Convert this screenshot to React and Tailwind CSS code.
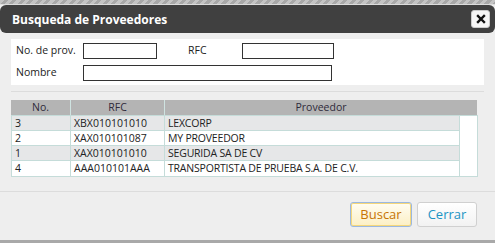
import React from "react"

const ROWS = [
  { no: "3", rfc: "XBX010101010", name: "LEXCORP" },
  { no: "2", rfc: "XAX010101087", name: "MY PROVEEDOR" },
  { no: "1", rfc: "XAX010101010", name: "SEGURIDA SA DE CV" },
  { no: "4", rfc: "AAA010101AAA", name: "TRANSPORTISTA DE PRUEBA S.A. DE C.V." },
]

function App() {
  return (
    <div
      className="flex h-[243px] w-[495px] flex-col overflow-hidden bg-[#eeeeee] text-[10.5px] text-[#222]"
      style={{ fontFamily: '"Open Sans", "DejaVu Sans", sans-serif' }}
    >
      <div className="h-[4px] shrink-0 bg-[repeating-linear-gradient(135deg,#c4c4c4_0,#c4c4c4_3px,#a8a8a8_3px,#a8a8a8_6px)]" />

      <div className="flex flex-1 flex-col border-t border-[#dddddd]">
        {/* title bar */}
        <div className="flex h-[28px] items-center justify-between rounded-[6px] bg-[#404040] pl-[12px] pr-[5px]">
          <span className="pt-[1px] text-[12px] font-bold text-white">Busqueda de Proveedores</span>
          <button className="flex h-[18px] w-[19px] items-center justify-center rounded-[3px] border border-[#cccccc] bg-[#f6f6f6]">
            <svg width="10" height="10" viewBox="0 0 10 10">
              <path d="M2 2 L8 8 M8 2 L2 8" stroke="#111" strokeWidth="2.4" strokeLinecap="square" />
            </svg>
          </button>
        </div>

        {/* search form */}
        <div className="mx-[11px] mt-[6px] flex flex-col gap-[6px] bg-white px-[5px] py-[4px]">
          <div className="flex items-center">
            <span className="w-[67px]">No. de prov.</span>
            <input className="h-[16px] w-[74px] border border-[#333]" />
            <span className="ml-[31px] w-[54px]">RFC</span>
            <input className="h-[16px] w-[92px] border border-[#333]" />
          </div>
          <div className="flex items-center">
            <span className="w-[67px]">Nombre</span>
            <input className="h-[16px] w-[249px] border border-[#333]" />
          </div>
        </div>

        <div className="mx-[11px] mt-[6px] h-px bg-[#dcdcdc]" />

        {/* results table */}
        <div className="ml-[11px] mt-[8px] w-[467px]">
          <div className="grid h-[15px] w-[466px] grid-cols-[59px_94px_1fr] bg-[#b4b4b4] text-[#2f2a3a]">
            <div className="text-center leading-[15px]">No.</div>
            <div className="border-l border-[#cfe3e1] text-center leading-[15px]">RFC</div>
            <div className="border-l border-[#cfe3e1] text-center leading-[15px]">Proveedor</div>
          </div>
          <div className="flex border border-[#c5dcd9]">
            <div className="flex w-[447px] flex-col">
              {ROWS.map((row, i) => (
                <div
                  key={row.no}
                  className={
                    "grid h-[15px] grid-cols-[58px_94px_1fr] border-b border-[#c5dcd9] leading-[14px] last:border-b-0 " +
                    (i % 2 === 0 ? "bg-[#e6e7e8]" : "bg-white")
                  }
                >
                  <div className="pl-[3px]">{row.no}</div>
                  <div className="border-l border-[#c5dcd9] pl-[3px]">{row.rfc}</div>
                  <div className="border-l border-[#c5dcd9] pl-[3px] tracking-[-0.2px]">{row.name}</div>
                </div>
              ))}
            </div>
            <div className="flex-1 border-l border-[#c5dcd9] bg-white" />
          </div>
        </div>

        {/* footer */}
        <div className="mt-auto border-t border-[#dcdcdc]">
          <div className="flex justify-end gap-[5px] pb-[13px] pr-[18px] pt-[10px] text-[13px]">
            <button className="h-[25px] w-[62px] rounded-[3px] border border-[#9bb8e0] bg-gradient-to-b from-[#fffdf2] to-[#fcefc4] text-[#c77405] shadow-[inset_0_0_0_1px_#f5d77a]">
              Buscar
            </button>
            <button className="h-[25px] w-[60px] rounded-[3px] border border-[#d0d0d0] bg-gradient-to-b from-white to-[#f2f2f2] text-[#1c94c4]">
              Cerrar
            </button>
          </div>
        </div>
      </div>

      <div className="h-[3px] shrink-0 bg-[#a9a9a9]" />
    </div>
  )
}

export default App
